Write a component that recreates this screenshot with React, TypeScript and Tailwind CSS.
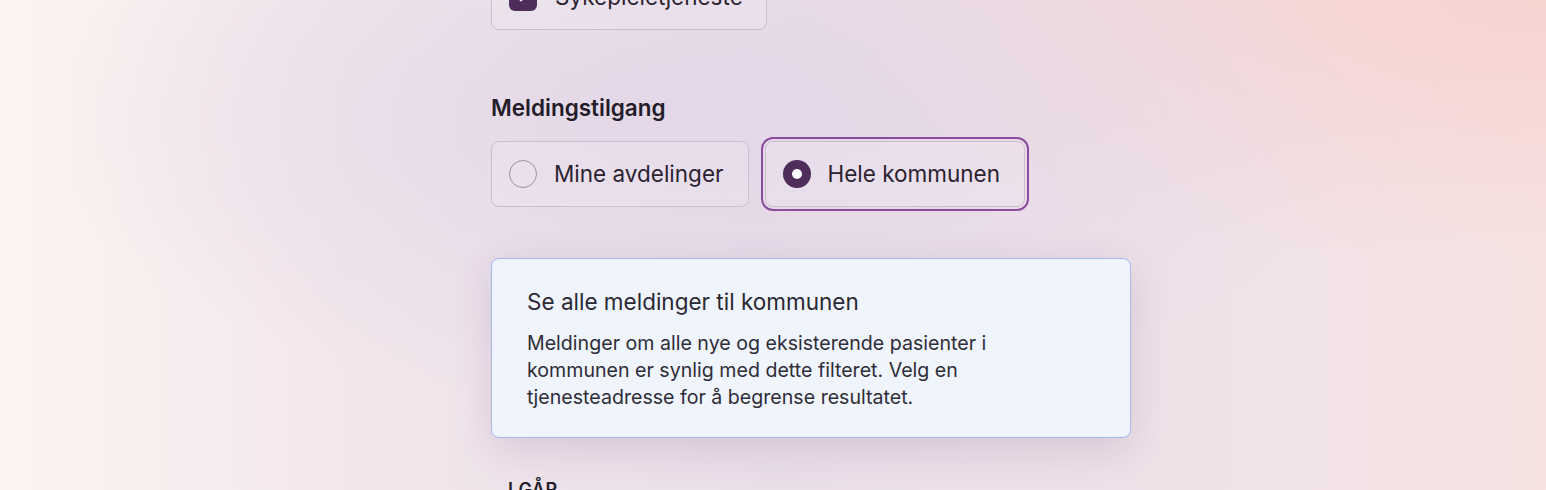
import { Check } from 'lucide-react'

const font = { fontFamily: 'Inter, "Noto Sans", sans-serif' }

const RadioCard = ({ label, selected }: { label: string; selected?: boolean }) => {
  return (
    <label
      className={
        selected
          ? 'flex h-[66px] items-center gap-[17px] rounded-lg border border-[#cbbfd0] bg-white/15 pl-[17px] pr-6 outline-2 outline-offset-2 outline-[#8a4d9c]'
          : 'flex h-[66px] items-center gap-[17px] rounded-lg border border-[#cbbfd0] bg-white/15 pl-[17px] pr-6'
      }
    >
      {selected ? (
        <span className="flex h-7 w-7 items-center justify-center rounded-full bg-[#4e2d5a]">
          <span className="h-[10px] w-[10px] rounded-full bg-white" />
        </span>
      ) : (
        <span className="h-7 w-7 rounded-full border-[1.5px] border-[#a08ea8]" />
      )}
      <span className="text-[22.5px] leading-7 text-[#2b2230]">{label}</span>
    </label>
  )
}

export default function App() {
  return (
    <div
      style={font}
      className="h-[490px] w-full overflow-hidden bg-[radial-gradient(ellipse_at_45%_25%,#e3d7e8_0%,transparent_55%),radial-gradient(ellipse_at_100%_0%,#f7d3d0_0%,transparent_38%),linear-gradient(90deg,#fdf4f1_0%,#f3e7ec_22%,#ebdfea_50%,#f0e2e8_80%,#f6e3e2_100%)]"
    >
      <div className="flex flex-col items-start pl-[491px]">
        {/* Tjenestetype */}
        <div className="-mt-[36px] flex h-[66px] w-[276px] items-center gap-[18px] rounded-lg border border-[#cbbfd0] bg-white/15 pl-[17px]">
          <span className="flex h-7 w-7 items-center justify-center rounded-md bg-[#4e2d5a]">
            <Check className="h-4 w-4 text-white" strokeWidth={3} />
          </span>
          <span className="text-[22.5px] leading-7 text-[#2b2230]">Sykepleietjeneste</span>
        </div>

        {/* Meldingstilgang */}
        <h2 className="mt-16 text-[22.5px] font-semibold leading-7 text-[#241c29]">Meldingstilgang</h2>
        <div className="mt-[19px] flex gap-4">
          <RadioCard label="Mine avdelinger" />
          <RadioCard label="Hele kommunen" selected />
        </div>

        <div className="mt-[51px] w-[640px] rounded-lg border border-[#a6b9ef] bg-[#f0f4fd] pb-[26px] pl-[35px] pr-9 pt-[29px] shadow-[0_12px_40px_rgba(90,55,110,0.16)]">
          <p className="text-[22.5px] leading-7 text-[#2a2833]">Se alle meldinger til kommunen</p>
          <p className="mt-[14px] max-w-[490px] text-[19.6px] leading-[27px] text-[#2e2d38]">
            Meldinger om alle nye og eksisterende pasienter i kommunen er synlig med dette filteret. Velg en
            tjenesteadresse for å begrense resultatet.
          </p>
        </div>

        <h3 className="mt-[38px] pl-[17px] text-[18px] font-semibold uppercase leading-7 tracking-wide text-[#241c29]">
          I går
        </h3>
      </div>
    </div>
  )
}
